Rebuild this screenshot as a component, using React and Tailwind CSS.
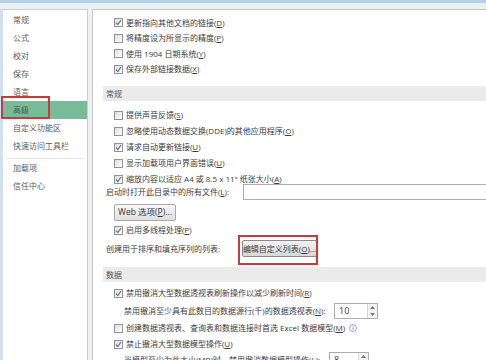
import React from 'react'

const font = "font-['Open_Sans','Noto_Sans_CJK_SC','Microsoft_YaHei',sans-serif]"

function Box({ checked }) {
  return (
    <span className="w-[9px] h-[9px] border border-[#929393] bg-gradient-to-br from-[#dedede] to-white flex items-center justify-center shrink-0">
      {checked && (
        <svg width="7" height="7" viewBox="0 0 7 7">
          <path d="M1 3.6 L2.8 5.6 L6 1" stroke="#5a6c9c" strokeWidth="1.2" fill="none" />
        </svg>
      )}
    </span>
  )
}

function Check({ checked, children, h = 'h-[16px]', className = '' }) {
  return (
    <div className={`flex items-center gap-[3px] pl-[21px] ${h} ${className}`}>
      <Box checked={checked} />
      <span className="whitespace-nowrap">{children}</span>
    </div>
  )
}

function Header({ children, className = '' }) {
  return (
    <div className={`ml-[10px] h-[15px] bg-[#ebebeb] flex items-center pl-[3px] text-[#555] ${className}`}>
      {children}
    </div>
  )
}

function Spin({ value, className = '' }) {
  return (
    <div className={`flex h-[16px] border border-[#abadb3] bg-white shrink-0 ${className}`}>
      <span className="flex-1 pl-[4px] leading-[14px] text-[9px]">{value}</span>
      <span className="w-[10px] flex flex-col border-l border-[#d5d5d5] bg-[#f4f4f4]">
        <span className="flex-1 flex items-center justify-center">
          <svg width="5" height="3" viewBox="0 0 5 3"><path d="M0 3 L2.5 0 L5 3Z" fill="#777" /></svg>
        </span>
        <span className="flex-1 flex items-center justify-center">
          <svg width="5" height="3" viewBox="0 0 5 3"><path d="M0 0 L2.5 3 L5 0Z" fill="#777" /></svg>
        </span>
      </span>
    </div>
  )
}

const nav = ['常规', '公式', '校对', '保存', '语言', '高级', '自定义功能区', '快速访问工具栏']

export default function App() {
  return (
    <div className={`relative w-[486px] h-[360px] overflow-hidden bg-[#eef0f3] text-[8px] text-[#3c3c3c] ${font}`}>
      <div className="h-[3px] bg-[#b7cfe9]" />
      <div className="h-[6px] bg-[#eceff2]" />
      <div className="flex h-[351px]">
        <div className="w-[3px] bg-[#d3dfec]" />
        {/* sidebar */}
        <div className="w-[85px] bg-white border-t border-r border-[#c9ccd1] pt-[1px] text-[#5a5a5a]">
          {nav.map((n) => (
            <div
              key={n}
              className={`h-[18px] flex items-center pl-[10px] ${n === '高级' ? 'bg-[#78bb98] text-[#3f5f4e]' : ''}`}
            >
              {n}
            </div>
          ))}
          <div className="mx-[4px] mt-[3px] h-px bg-[#e2e2e2]" />
          <div className="h-[18px] flex items-center pl-[10px]">加载项</div>
          <div className="h-[18px] flex items-center pl-[10px]">信任中心</div>
        </div>
        <div className="w-[4px]" />
        {/* main */}
        <div className="flex-1 bg-white border-t border-l border-[#c9c3c6] pt-[5px]">
          <Check checked h="h-[15.5px]">更新指向其他文档的链接(<u>D</u>)</Check>
          <Check h="h-[15.5px]">将精度设为所显示的精度(<u>P</u>)</Check>
          <Check h="h-[15.5px]">使用 1904 日期系统(<u>Y</u>)</Check>
          <Check checked h="h-[15.5px]">保存外部链接数据(<u>X</u>)</Check>

          <Header className="mt-[9px]">常规</Header>
          <Check className="mt-[6px]">提供声音反馈(<u>S</u>)</Check>
          <Check>忽略使用动态数据交换(DDE)的其他应用程序(<u>O</u>)</Check>
          <Check checked>请求自动更新链接(<u>U</u>)</Check>
          <Check>显示加载项用户界面错误(<u>U</u>)</Check>
          <Check checked>缩放内容以适应 A4 或 8.5 x 11" 纸张大小(<u>A</u>)</Check>

          <div className="flex items-center h-[16px] -mt-[3px] pl-[13px]">
            <span className="w-[137px] whitespace-nowrap">启动时打开此目录中的所有文件(<u>L</u>):</span>
            <span className="flex-1 h-[16px] border border-[#abadb3] border-r-0 bg-white" />
          </div>

          <div className="ml-[21px] mt-[4px] w-[62px] h-[17px] border border-[#a8a8a8] rounded-[2px] bg-gradient-to-b from-[#f7f7f7] to-[#e0e0e0] flex items-center justify-center text-[#333] text-[8.5px]">
            Web 选项(<u>P</u>)...
          </div>

          <Check checked className="mt-[1px]">启用多线程处理(<u>P</u>)</Check>

          <div className="flex items-center h-[17px] mt-[2px] pl-[13px]">
            <span className="w-[136px] whitespace-nowrap">创建用于排序和填充序列的列表:</span>
            <span className="w-[75px] h-[17px] border border-[#8a8a8a] rounded-[2px] bg-gradient-to-b from-[#f2f2f2] to-[#d8d8d8] flex items-center justify-center whitespace-nowrap">
              编辑自定义列表(<u>O</u>)...
            </span>
          </div>

          <Header className="mt-[10px]">数据</Header>
          <Check checked className="mt-[3px]">禁用撤消大型数据透视表刷新操作以减少刷新时间(<u>R</u>)</Check>
          <div className="flex items-center h-[16px] mt-[2px] pl-[31px]">
            <span className="w-[210px] whitespace-nowrap">禁用撤消至少具有此数目的数据源行(千)的数据透视表(<u>N</u>):</span>
            <Spin value="10" className="w-[44px]" />
          </div>
          <div className="flex items-center gap-[3px] pl-[21px] h-[16px] mt-[1px]">
            <Box />
            <span className="whitespace-nowrap">创建数据透视表、查询表和数据连接时首选 Excel 数据模型(<u>M</u>)</span>
            <svg width="8" height="8" viewBox="0 0 8 8" className="ml-[1px]">
              <circle cx="4" cy="4" r="3.4" stroke="#6b8fd0" strokeWidth="0.8" fill="none" />
              <rect x="3.6" y="3.4" width="0.9" height="2.6" fill="#6b8fd0" />
              <rect x="3.6" y="2" width="0.9" height="0.9" fill="#6b8fd0" />
            </svg>
          </div>
          <Check checked>禁止撤消大型数据模型操作(<u>U</u>)</Check>
          <div className="flex items-center h-[16px] pl-[31px]">
            <span className="w-[205px] whitespace-nowrap">当模型至少为此大小(MB)时，禁用撤消数据模型操作(<u>L</u>):</span>
            <Spin value="8" className="w-[40px]" />
          </div>
        </div>
      </div>

      {/* red annotation boxes */}
      <div className="absolute left-[1px] top-[96px] w-[49px] h-[23px] border-2 border-[#c93a3e]" />
      <div className="absolute left-[238px] top-[235px] w-[80px] h-[30px] border-2 border-[#c93a3e]" />
    </div>
  )
}
